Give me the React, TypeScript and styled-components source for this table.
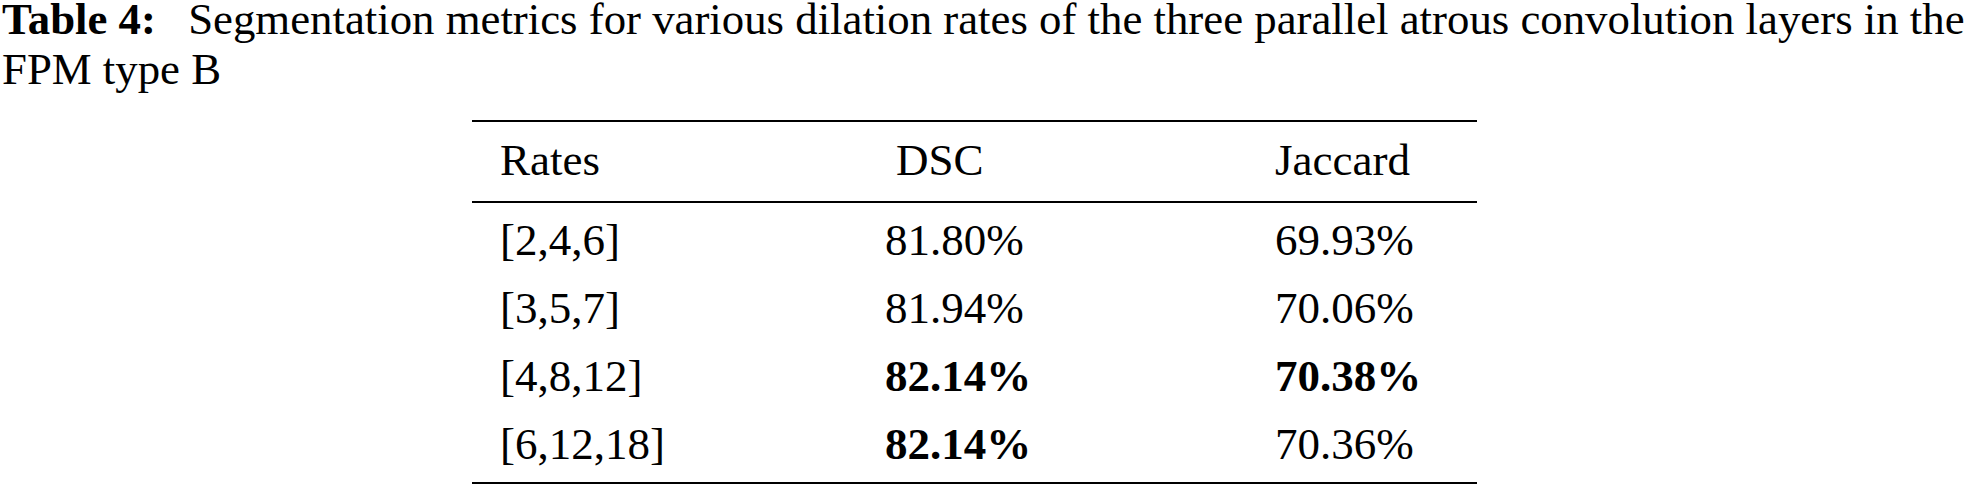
import styled, { createGlobalStyle } from 'styled-components';

const GlobalStyle = createGlobalStyle`
  html, body {
    margin: 0;
    padding: 0;
    background: #ffffff;
  }
  body {
    font-family: "Liberation Serif", "Times New Roman", serif;
    color: #000000;
  }
`;

const Page = styled.div`
  width: 1968px;
  height: 485px;
  overflow: hidden;
  background: #ffffff;
`;

const Caption = styled.p`
  margin: -6px 0 0 2px;
  font-size: 44.8px;
  line-height: 50px;
  white-space: nowrap;
`;

const CaptionLabel = styled.b`
  margin-right: 21px;
`;

const Table = styled.div`
  width: 1005px;
  margin: 26px 0 0 472px;
  border-top: 2px solid #000;
  border-bottom: 2px solid #000;
`;

const Row = styled.div<{ $head?: boolean }>`
  display: grid;
  grid-template-columns: 385px 390px 230px;
  font-size: 45px;
  line-height: 68px;
  padding: ${p => (p.$head ? '4px 0 7px' : '0')};
  border-bottom: ${p => (p.$head ? '2px solid #000' : 'none')};
`;

const Body = styled.div`
  padding: 3px 0 4px;
`;

const Cell = styled.div<{ $bold?: boolean; $shift?: number }>`
  padding-left: ${p => 28 + (p.$shift ?? 0)}px;
  font-weight: ${p => (p.$bold ? 700 : 400)};
  white-space: nowrap;
`;

const rows = [
  { rate: '[2,4,6]', dsc: '81.80%', jac: '69.93%', bd: false, bj: false },
  { rate: '[3,5,7]', dsc: '81.94%', jac: '70.06%', bd: false, bj: false },
  { rate: '[4,8,12]', dsc: '82.14%', jac: '70.38%', bd: true, bj: true },
  { rate: '[6,12,18]', dsc: '82.14%', jac: '70.36%', bd: true, bj: false },
];

export default function App() {
  return (
    <Page>
      <GlobalStyle />
      <Caption>
        <CaptionLabel>Table 4:</CaptionLabel> Segmentation metrics for various dilation rates of the
        three parallel atrous convolution layers in the
        <br />
        FPM type B
      </Caption>
      <Table>
        <Row $head>
          <Cell>Rates</Cell>
          <Cell $shift={11}>DSC</Cell>
          <Cell>Jaccard</Cell>
        </Row>
        <Body>
          {rows.map(r => (
            <Row key={r.rate}>
              <Cell>{r.rate}</Cell>
              <Cell $bold={r.bd}>{r.dsc}</Cell>
              <Cell $bold={r.bj}>{r.jac}</Cell>
            </Row>
          ))}
        </Body>
      </Table>
    </Page>
  );
}
